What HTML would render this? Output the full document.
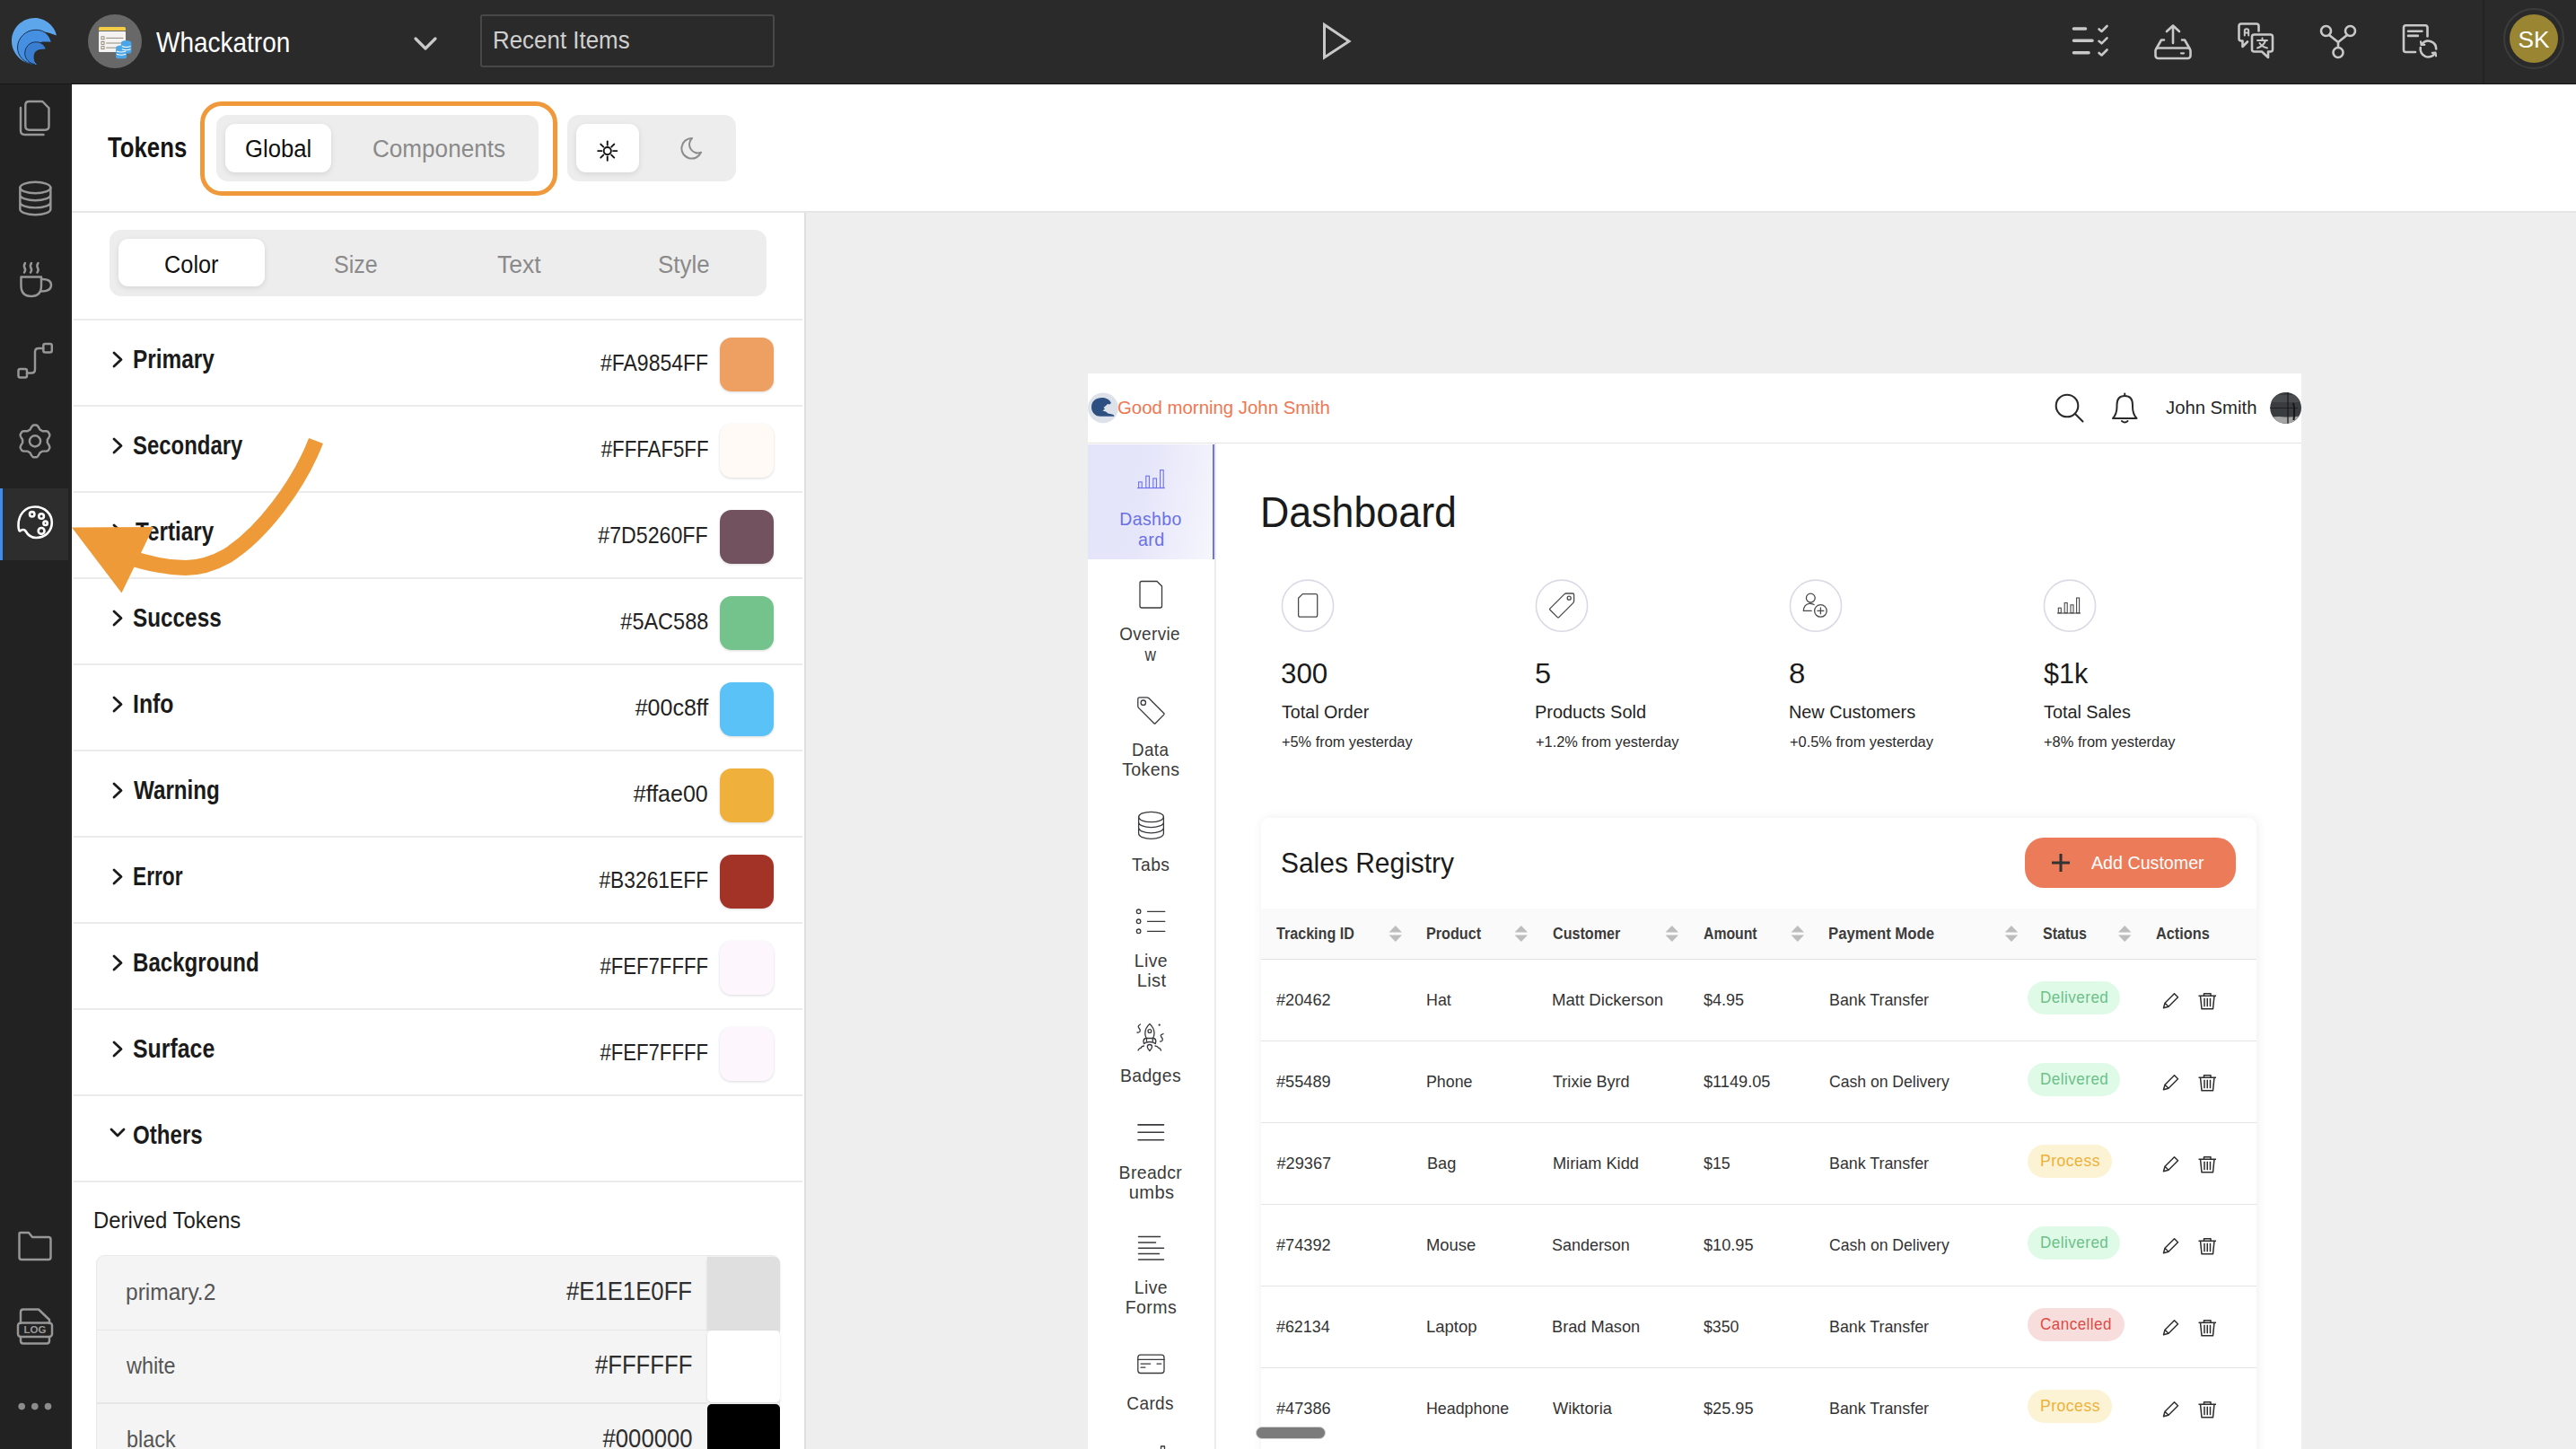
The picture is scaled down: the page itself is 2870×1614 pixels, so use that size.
<!DOCTYPE html>
<html><head><meta charset="utf-8">
<style>
*{box-sizing:border-box;margin:0;padding:0}
html,body{width:2870px;height:1614px;overflow:hidden;background:#eeeeee;font-family:"Liberation Sans",sans-serif;position:relative}
.a{position:absolute}
.t{position:absolute;white-space:nowrap;line-height:1}
svg.ov{position:absolute;left:0;top:0;width:2870px;height:1614px;pointer-events:none}
</style></head>
<body>
<div class="a" style="left:0px;top:0px;width:2870px;height:92.5px;background:#2a2a2a"></div>
<div class="a" style="left:0px;top:92.5px;width:2870px;height:1.3px;background:#161616"></div>
<div id="t1" class="t" style="top:31.66px;font-size:30.52px;color:#fff;left:174.10px;transform-origin:left center;transform:scaleX(0.9167);">Whackatron</div>
<div class="a" style="left:534.5px;top:16px;width:328.5px;height:59px;border:2px solid #484848;border-radius:3px"></div>
<div id="t2" class="t" style="top:30.00px;font-size:28.34px;color:#cfcfcf;left:549.40px;transform-origin:left center;transform:scaleX(0.9146);">Recent Items</div>
<div class="a" style="left:2766px;top:0px;width:1.5px;height:93px;background:#232323"></div>
<div class="a" style="left:0px;top:93.8px;width:80px;height:1521px;background:#222"></div>
<div class="a" style="left:78px;top:93.8px;width:1px;height:1521px;background:#2a2a2a"></div>
<div class="a" style="left:79px;top:93.8px;width:1px;height:1521px;background:#181818"></div>
<div class="a" style="left:0px;top:544px;width:76px;height:80px;background:#2d2d2d"></div>
<div class="a" style="left:0px;top:544px;width:3px;height:80px;background:#3e8ded"></div>
<div class="a" style="left:80px;top:93.8px;width:2790px;height:143.2px;background:#fff"></div>
<div class="a" style="left:80px;top:235px;width:2790px;height:2px;background:#e6e6e6"></div>
<div id="t4" class="t" style="top:149.16px;font-size:30.52px;color:#151515;font-weight:bold;left:120.10px;transform-origin:left center;transform:scaleX(0.8436);">Tokens</div>
<div class="a" style="left:222.5px;top:112.5px;width:398.5px;height:105.5px;border:5px solid #f0993a;border-radius:24px"></div>
<div class="a" style="left:241px;top:128px;width:359px;height:74px;background:#ededed;border-radius:13px"></div>
<div class="a" style="left:251px;top:138px;width:118px;height:54px;background:#fff;border-radius:11px;box-shadow:0 2px 6px rgba(0,0,0,.10)"></div>
<div id="t5" class="t" style="top:151.62px;font-size:27.62px;color:#111;left:273.30px;transform-origin:left center;transform:scaleX(0.9298);">Global</div>
<div id="t6" class="t" style="top:151.62px;font-size:27.62px;color:#8a8a8a;left:415.20px;transform-origin:left center;transform:scaleX(0.9452);">Components</div>
<div class="a" style="left:632px;top:128px;width:188px;height:74px;background:#ededed;border-radius:13px"></div>
<div class="a" style="left:642px;top:138px;width:70px;height:54px;background:#fff;border-radius:11px;box-shadow:0 2px 6px rgba(0,0,0,.10)"></div>
<div class="a" style="left:80px;top:237px;width:816px;height:1377px;background:#fff"></div>
<div class="a" style="left:895.5px;top:237px;width:2px;height:1377px;background:#dedede"></div>
<div class="a" style="left:121.5px;top:256px;width:732.5px;height:73.5px;background:#ededed;border-radius:13px"></div>
<div class="a" style="left:132px;top:266px;width:162.5px;height:53px;background:#fff;border-radius:11px;box-shadow:0 2px 6px rgba(0,0,0,.10)"></div>
<div id="t7" class="t" style="top:279.53px;font-size:28.20px;color:#111;left:182.66px;transform-origin:left center;transform:scaleX(0.8988);">Color</div>
<div id="t8" class="t" style="top:279.53px;font-size:28.20px;color:#8a8a8a;left:372.20px;transform-origin:left center;transform:scaleX(0.8868);">Size</div>
<div id="t9" class="t" style="top:279.53px;font-size:28.20px;color:#8a8a8a;left:554.20px;transform-origin:left center;transform:scaleX(0.9412);">Text</div>
<div id="t10" class="t" style="top:279.53px;font-size:28.20px;color:#8a8a8a;left:733.20px;transform-origin:left center;transform:scaleX(0.9180);">Style</div>
<div class="a" style="left:82px;top:355px;width:812px;height:2px;background:#ebebeb"></div>
<div class="a" style="left:82px;top:451px;width:812px;height:2px;background:#ebebeb"></div>
<div class="a" style="left:82px;top:547px;width:812px;height:2px;background:#ebebeb"></div>
<div class="a" style="left:82px;top:643px;width:812px;height:2px;background:#ebebeb"></div>
<div class="a" style="left:82px;top:739px;width:812px;height:2px;background:#ebebeb"></div>
<div class="a" style="left:82px;top:835px;width:812px;height:2px;background:#ebebeb"></div>
<div class="a" style="left:82px;top:931px;width:812px;height:2px;background:#ebebeb"></div>
<div class="a" style="left:82px;top:1027px;width:812px;height:2px;background:#ebebeb"></div>
<div class="a" style="left:82px;top:1123px;width:812px;height:2px;background:#ebebeb"></div>
<div class="a" style="left:82px;top:1219px;width:812px;height:2px;background:#ebebeb"></div>
<div class="a" style="left:82px;top:1315px;width:812px;height:2px;background:#ebebeb"></div>
<div id="t11" class="t" style="top:384.77px;font-size:29.80px;color:#1b1b1b;font-weight:bold;left:148.30px;transform-origin:left center;transform:scaleX(0.8182);">Primary</div>
<div id="t12" class="t" style="top:390.60px;font-size:26.45px;color:#232323;right:2081.00px;transform-origin:right center;transform:scaleX(0.8702);">#FA9854FF</div>
<div class="a" style="left:802px;top:376px;width:60px;height:60px;background:#eda062;border-radius:13px;box-shadow:0 1px 3px rgba(0,0,0,.15)"></div>
<div id="t13" class="t" style="top:480.77px;font-size:29.80px;color:#1b1b1b;font-weight:bold;left:148.30px;transform-origin:left center;transform:scaleX(0.8026);">Secondary</div>
<div id="t14" class="t" style="top:486.60px;font-size:26.45px;color:#232323;right:2081.00px;transform-origin:right center;transform:scaleX(0.8407);">#FFFAF5FF</div>
<div class="a" style="left:802px;top:472px;width:60px;height:60px;background:#fffaf5;border-radius:13px;box-shadow:0 1px 3px rgba(0,0,0,.15)"></div>
<div id="t15" class="t" style="top:576.77px;font-size:29.80px;color:#1b1b1b;font-weight:bold;left:150.70px;transform-origin:left center;transform:scaleX(0.8137);">Tertiary</div>
<div id="t16" class="t" style="top:582.60px;font-size:26.45px;color:#232323;right:2081.00px;transform-origin:right center;transform:scaleX(0.8759);">#7D5260FF</div>
<div class="a" style="left:802px;top:568px;width:60px;height:60px;background:#735260;border-radius:13px;box-shadow:0 1px 3px rgba(0,0,0,.15)"></div>
<div id="t17" class="t" style="top:672.77px;font-size:29.80px;color:#1b1b1b;font-weight:bold;left:148.30px;transform-origin:left center;transform:scaleX(0.8159);">Success</div>
<div id="t18" class="t" style="top:678.60px;font-size:26.45px;color:#232323;right:2081.00px;transform-origin:right center;transform:scaleX(0.8880);">#5AC588</div>
<div class="a" style="left:802px;top:664px;width:60px;height:60px;background:#74c28c;border-radius:13px;box-shadow:0 1px 3px rgba(0,0,0,.15)"></div>
<div id="t19" class="t" style="top:768.77px;font-size:29.80px;color:#1b1b1b;font-weight:bold;left:148.30px;transform-origin:left center;transform:scaleX(0.8327);">Info</div>
<div id="t20" class="t" style="top:774.60px;font-size:26.45px;color:#232323;right:2081.00px;transform-origin:right center;transform:scaleX(0.9458);">#00c8ff</div>
<div class="a" style="left:802px;top:760px;width:60px;height:60px;background:#5ac2f7;border-radius:13px;box-shadow:0 1px 3px rgba(0,0,0,.15)"></div>
<div id="t21" class="t" style="top:864.77px;font-size:29.80px;color:#1b1b1b;font-weight:bold;left:149.10px;transform-origin:left center;transform:scaleX(0.8117);">Warning</div>
<div id="t22" class="t" style="top:870.60px;font-size:26.45px;color:#232323;right:2081.00px;transform-origin:right center;transform:scaleX(0.9458);">#ffae00</div>
<div class="a" style="left:802px;top:856px;width:60px;height:60px;background:#f0b03c;border-radius:13px;box-shadow:0 1px 3px rgba(0,0,0,.15)"></div>
<div id="t23" class="t" style="top:960.77px;font-size:29.80px;color:#1b1b1b;font-weight:bold;left:148.30px;transform-origin:left center;transform:scaleX(0.7626);">Error</div>
<div id="t24" class="t" style="top:966.60px;font-size:26.45px;color:#232323;right:2081.00px;transform-origin:right center;transform:scaleX(0.8624);">#B3261EFF</div>
<div class="a" style="left:802px;top:952px;width:60px;height:60px;background:#a33327;border-radius:13px;box-shadow:0 1px 3px rgba(0,0,0,.15)"></div>
<div id="t25" class="t" style="top:1056.77px;font-size:29.80px;color:#1b1b1b;font-weight:bold;left:148.30px;transform-origin:left center;transform:scaleX(0.8088);">Background</div>
<div id="t26" class="t" style="top:1062.60px;font-size:26.45px;color:#232323;right:2081.00px;transform-origin:right center;transform:scaleX(0.8371);">#FEF7FFFF</div>
<div class="a" style="left:802px;top:1048px;width:60px;height:60px;background:#fdf7fd;border-radius:13px;box-shadow:0 1px 3px rgba(0,0,0,.15)"></div>
<div id="t27" class="t" style="top:1152.77px;font-size:29.80px;color:#1b1b1b;font-weight:bold;left:148.30px;transform-origin:left center;transform:scaleX(0.8351);">Surface</div>
<div id="t28" class="t" style="top:1158.60px;font-size:26.45px;color:#232323;right:2081.00px;transform-origin:right center;transform:scaleX(0.8371);">#FEF7FFFF</div>
<div class="a" style="left:802px;top:1144px;width:60px;height:60px;background:#fdf7fd;border-radius:13px;box-shadow:0 1px 3px rgba(0,0,0,.15)"></div>
<div id="t29" class="t" style="top:1248.77px;font-size:29.80px;color:#1b1b1b;font-weight:bold;left:148.30px;transform-origin:left center;transform:scaleX(0.8090);">Others</div>
<div id="t30" class="t" style="top:1346.69px;font-size:25.87px;color:#1e1e1e;left:104.46px;transform-origin:left center;transform:scaleX(0.9235);">Derived Tokens</div>
<div class="a" style="left:106.5px;top:1398.3px;width:762.5px;height:300px;background:#f4f4f4;border:1.5px solid #e9e9e9;border-radius:9px"></div>
<div class="a" style="left:108px;top:1480.5px;width:680px;height:1.5px;background:#e6e6e6"></div>
<div class="a" style="left:108px;top:1562px;width:680px;height:1.5px;background:#e6e6e6"></div>
<div class="a" style="left:788px;top:1399.5px;width:80.5px;height:81.5px;background:#dfdfdf;border-top-right-radius:8px;box-shadow:0 1px 3px rgba(0,0,0,.12)"></div>
<div class="a" style="left:788px;top:1482px;width:80.5px;height:80px;background:#fff;border-radius:5px;box-shadow:0 1px 3px rgba(0,0,0,.12)"></div>
<div class="a" style="left:788px;top:1564px;width:80.5px;height:80px;background:#000;border-radius:5px"></div>
<div id="t31" class="t" style="top:1427.41px;font-size:25.15px;color:#555;left:140.18px;transform-origin:left center;transform:scaleX(0.9746);">primary.2</div>
<div id="t32" class="t" style="top:1423.35px;font-size:29.94px;color:#2e2e2e;right:2098.80px;transform-origin:right center;transform:scaleX(0.8595);">#E1E1E0FF</div>
<div id="t33" class="t" style="top:1509.01px;font-size:25.15px;color:#555;left:140.90px;transform-origin:left center;transform:scaleX(0.9300);">white</div>
<div id="t34" class="t" style="top:1504.95px;font-size:29.94px;color:#2e2e2e;right:2098.80px;transform-origin:right center;transform:scaleX(0.8585);">#FFFFFF</div>
<div id="t35" class="t" style="top:1590.61px;font-size:25.15px;color:#555;left:140.90px;transform-origin:left center;transform:scaleX(0.9300);">black</div>
<div id="t36" class="t" style="top:1586.55px;font-size:29.94px;color:#2e2e2e;right:2098.80px;transform-origin:right center;transform:scaleX(0.8580);">#000000</div>
<div class="a" style="left:1212px;top:416px;width:1352px;height:1198px;background:#fff;overflow:hidden"></div>
<div class="a" style="left:1212px;top:492.5px;width:1352px;height:1.5px;background:#e4e4e4"></div>
<div id="t37" class="t" style="top:443.41px;font-size:21.08px;color:#ee7752;left:1245.35px;transform-origin:left center;transform:scaleX(0.9670);">Good morning John Smith</div>
<div id="t38" class="t" style="top:443.41px;font-size:21.08px;color:#262626;left:2413.00px;transform-origin:left center;transform:scaleX(0.9619);">John Smith</div>
<div class="a" style="left:1353px;top:494px;width:1.5px;height:1120px;background:#ececec"></div>
<div class="a" style="left:1212px;top:494.5px;width:139.5px;height:128px;background:linear-gradient(100deg,#e3e3fa 0%,#e6e6fa 45%,#f6f6fd 100%)"></div>
<div class="a" style="left:1350.5px;top:494.5px;width:2.5px;height:128px;background:#6d74ea"></div>
<div id="t39" class="t" style="top:568.08px;font-size:19.99px;color:#6a70e6;letter-spacing:0.400px;left:1282.50px;transform-origin:left center;transform:translateX(-50%) scaleX(0.9737);">Dashbo</div>
<div id="t40" class="t" style="top:590.58px;font-size:19.99px;color:#6a70e6;letter-spacing:0.400px;left:1282.50px;transform-origin:left center;transform:translateX(-50%) scaleX(0.9883);">ard</div>
<div id="t41" class="t" style="top:696.08px;font-size:19.99px;color:#3a3a3a;letter-spacing:0.400px;left:1282.50px;transform-origin:left center;transform:translateX(-50%) scaleX(0.9458);">Overvie</div>
<div id="t42" class="t" style="top:718.58px;font-size:19.99px;color:#3a3a3a;letter-spacing:0.400px;left:1282.50px;transform-origin:left center;transform:translateX(-50%) scaleX(0.8602);">w</div>
<div id="t43" class="t" style="top:824.68px;font-size:19.99px;color:#3a3a3a;letter-spacing:0.400px;left:1282.50px;transform-origin:left center;transform:translateX(-50%) scaleX(0.9404);">Data</div>
<div id="t44" class="t" style="top:847.18px;font-size:19.99px;color:#3a3a3a;letter-spacing:0.400px;left:1282.50px;transform-origin:left center;transform:translateX(-50%) scaleX(0.9778);">Tokens</div>
<div id="t45" class="t" style="top:953.48px;font-size:19.99px;color:#3a3a3a;letter-spacing:0.400px;left:1282.50px;transform-origin:left center;transform:translateX(-50%) scaleX(0.9631);">Tabs</div>
<div id="t46" class="t" style="top:1059.98px;font-size:19.99px;color:#3a3a3a;letter-spacing:0.400px;left:1282.50px;transform-origin:left center;transform:translateX(-50%) scaleX(0.9700);">Live</div>
<div id="t47" class="t" style="top:1082.48px;font-size:19.99px;color:#3a3a3a;letter-spacing:0.400px;left:1282.50px;transform-origin:left center;transform:translateX(-50%) scaleX(1.0058);">List</div>
<div id="t48" class="t" style="top:1188.28px;font-size:19.99px;color:#3a3a3a;letter-spacing:0.400px;left:1282.50px;transform-origin:left center;transform:translateX(-50%) scaleX(0.9700);">Badges</div>
<div id="t49" class="t" style="top:1295.88px;font-size:19.99px;color:#3a3a3a;letter-spacing:0.400px;left:1282.50px;transform-origin:left center;transform:translateX(-50%) scaleX(0.9700);">Breadcr</div>
<div id="t50" class="t" style="top:1318.38px;font-size:19.99px;color:#3a3a3a;letter-spacing:0.400px;left:1282.50px;transform-origin:left center;transform:translateX(-50%) scaleX(1.0051);">umbs</div>
<div id="t51" class="t" style="top:1423.83px;font-size:19.99px;color:#3a3a3a;letter-spacing:0.400px;left:1282.50px;transform-origin:left center;transform:translateX(-50%) scaleX(0.9700);">Live</div>
<div id="t52" class="t" style="top:1446.33px;font-size:19.99px;color:#3a3a3a;letter-spacing:0.400px;left:1282.50px;transform-origin:left center;transform:translateX(-50%) scaleX(0.9789);">Forms</div>
<div id="t53" class="t" style="top:1553.08px;font-size:19.99px;color:#3a3a3a;letter-spacing:0.400px;left:1282.50px;transform-origin:left center;transform:translateX(-50%) scaleX(0.9513);">Cards</div>
<div id="t54" class="t" style="top:546.08px;font-size:48.33px;color:#1b1b1b;left:1403.80px;transform-origin:left center;transform:scaleX(0.9261);">Dashboard</div>
<div id="t55" class="t" style="top:735.60px;font-size:30.89px;color:#1b1b1b;left:1427.20px;transform-origin:left center;transform:scaleX(1.0151);">300</div>
<div id="t56" class="t" style="top:781.66px;font-size:21.08px;color:#242424;left:1428.00px;transform-origin:left center;transform:scaleX(0.9327);">Total Order</div>
<div id="t57" class="t" style="top:818.77px;font-size:15.63px;color:#2a2a2a;left:1428.00px;transform-origin:left center;transform:scaleX(1.0447);">+5% from yesterday</div>
<div id="t58" class="t" style="top:735.60px;font-size:30.89px;color:#1b1b1b;left:1710.20px;transform-origin:left center;transform:scaleX(1.0517);">5</div>
<div id="t59" class="t" style="top:781.66px;font-size:21.08px;color:#242424;left:1710.20px;transform-origin:left center;transform:scaleX(0.9446);">Products Sold</div>
<div id="t60" class="t" style="top:818.77px;font-size:15.63px;color:#2a2a2a;left:1711.00px;transform-origin:left center;transform:scaleX(1.0460);">+1.2% from yesterday</div>
<div id="t61" class="t" style="top:735.60px;font-size:30.89px;color:#1b1b1b;left:1993.20px;transform-origin:left center;transform:scaleX(1.0667);">8</div>
<div id="t62" class="t" style="top:781.66px;font-size:21.08px;color:#242424;left:1993.20px;transform-origin:left center;transform:scaleX(0.9414);">New Customers</div>
<div id="t63" class="t" style="top:818.77px;font-size:15.63px;color:#2a2a2a;left:1994.00px;transform-origin:left center;transform:scaleX(1.0493);">+0.5% from yesterday</div>
<div id="t64" class="t" style="top:735.60px;font-size:30.89px;color:#1b1b1b;left:2277.00px;transform-origin:left center;transform:scaleX(0.9901);">$1k</div>
<div id="t65" class="t" style="top:781.66px;font-size:21.08px;color:#242424;left:2277.00px;transform-origin:left center;transform:scaleX(0.9403);">Total Sales</div>
<div id="t66" class="t" style="top:818.77px;font-size:15.63px;color:#2a2a2a;left:2277.00px;transform-origin:left center;transform:scaleX(1.0514);">+8% from yesterday</div>
<div class="a" style="left:1405px;top:911.25px;width:1109px;height:800px;background:#fff;border-radius:9px;box-shadow:1px 0 12px rgba(0,0,0,.07)"></div>
<div id="t67" class="t" style="top:944.93px;font-size:31.98px;color:#1b1b1b;left:1427.25px;transform-origin:left center;transform:scaleX(0.9366);">Sales Registry</div>
<div class="a" style="left:2255.5px;top:933px;width:235.75px;height:55.75px;background:#ec7b5a;border-radius:21px"></div>
<div id="t68" class="t" style="top:949.66px;font-size:21.08px;color:#fff;left:2330.10px;transform-origin:left center;transform:scaleX(0.9328);">Add Customer</div>
<div class="a" style="left:1405px;top:1012px;width:1109px;height:56px;background:#fafafa"></div>
<div class="a" style="left:1405px;top:1067.5px;width:1109px;height:1.5px;background:#e2e2e2"></div>
<div id="t69" class="t" style="top:1030.75px;font-size:18.90px;color:#3c3c3c;font-weight:bold;left:1422.10px;transform-origin:left center;transform:scaleX(0.8529);">Tracking ID</div>
<div id="t70" class="t" style="top:1030.75px;font-size:18.90px;color:#3c3c3c;font-weight:bold;left:1589.20px;transform-origin:left center;transform:scaleX(0.8566);">Product</div>
<div id="t71" class="t" style="top:1030.75px;font-size:18.90px;color:#3c3c3c;font-weight:bold;left:1730.00px;transform-origin:left center;transform:scaleX(0.8530);">Customer</div>
<div id="t72" class="t" style="top:1030.75px;font-size:18.90px;color:#3c3c3c;font-weight:bold;left:1898.00px;transform-origin:left center;transform:scaleX(0.8356);">Amount</div>
<div id="t73" class="t" style="top:1030.75px;font-size:18.90px;color:#3c3c3c;font-weight:bold;left:2037.25px;transform-origin:left center;transform:scaleX(0.8851);">Payment Mode</div>
<div id="t74" class="t" style="top:1030.75px;font-size:18.90px;color:#3c3c3c;font-weight:bold;left:2276.05px;transform-origin:left center;transform:scaleX(0.8488);">Status</div>
<div id="t75" class="t" style="top:1030.75px;font-size:18.90px;color:#3c3c3c;font-weight:bold;left:2402.00px;transform-origin:left center;transform:scaleX(0.8639);">Actions</div>
<div id="t76" class="t" style="top:1105.12px;font-size:18.17px;color:#333;left:1422.10px;transform-origin:left center;transform:scaleX(1.0003);">#20462</div>
<div id="t77" class="t" style="top:1105.12px;font-size:18.17px;color:#333;left:1589.20px;transform-origin:left center;transform:scaleX(0.9828);">Hat</div>
<div id="t78" class="t" style="top:1105.12px;font-size:18.17px;color:#333;left:1729.20px;transform-origin:left center;transform:scaleX(1.0252);">Matt Dickerson</div>
<div id="t79" class="t" style="top:1105.12px;font-size:18.17px;color:#333;left:1898.00px;transform-origin:left center;transform:scaleX(0.9891);">$4.95</div>
<div id="t80" class="t" style="top:1105.12px;font-size:18.17px;color:#333;left:2037.65px;transform-origin:left center;transform:scaleX(0.9822);">Bank Transfer</div>
<div class="a" style="left:2259px;top:1093px;width:103px;height:37px;background:#dffbe8;border-radius:19px"></div>
<div id="t81" class="t" style="top:1101.74px;font-size:18.31px;color:#6cc089;letter-spacing:0.500px;left:2273.20px;transform-origin:left center;transform:scaleX(0.9330);">Delivered</div>
<div class="a" style="left:1405px;top:1158.5px;width:1109px;height:1.5px;background:#e4e4e4"></div>
<div id="t82" class="t" style="top:1196.12px;font-size:18.17px;color:#333;left:1422.10px;transform-origin:left center;transform:scaleX(1.0003);">#55489</div>
<div id="t83" class="t" style="top:1196.12px;font-size:18.17px;color:#333;left:1589.20px;transform-origin:left center;transform:scaleX(0.9804);">Phone</div>
<div id="t84" class="t" style="top:1196.12px;font-size:18.17px;color:#333;left:1730.00px;transform-origin:left center;transform:scaleX(0.9942);">Trixie Byrd</div>
<div id="t85" class="t" style="top:1196.12px;font-size:18.17px;color:#333;left:1898.00px;transform-origin:left center;transform:scaleX(1.0001);">$1149.05</div>
<div id="t86" class="t" style="top:1196.12px;font-size:18.17px;color:#333;left:2037.65px;transform-origin:left center;transform:scaleX(0.9674);">Cash on Delivery</div>
<div class="a" style="left:2259px;top:1184px;width:103px;height:37px;background:#dffbe8;border-radius:19px"></div>
<div id="t87" class="t" style="top:1192.74px;font-size:18.31px;color:#6cc089;letter-spacing:0.500px;left:2273.20px;transform-origin:left center;transform:scaleX(0.9330);">Delivered</div>
<div class="a" style="left:1405px;top:1249.5px;width:1109px;height:1.5px;background:#e4e4e4"></div>
<div id="t88" class="t" style="top:1287.12px;font-size:18.17px;color:#333;left:1422.50px;">#29367</div>
<div id="t89" class="t" style="top:1287.12px;font-size:18.17px;color:#333;left:1590.00px;">Bag</div>
<div id="t90" class="t" style="top:1287.12px;font-size:18.17px;color:#333;left:1730.00px;">Miriam Kidd</div>
<div id="t91" class="t" style="top:1287.12px;font-size:18.17px;color:#333;left:1898.00px;transform-origin:left center;transform:scaleX(0.9834);">$15</div>
<div id="t92" class="t" style="top:1287.12px;font-size:18.17px;color:#333;left:2037.65px;transform-origin:left center;transform:scaleX(0.9822);">Bank Transfer</div>
<div class="a" style="left:2259px;top:1275px;width:93.5px;height:37px;background:#fbf3d3;border-radius:19px"></div>
<div id="t93" class="t" style="top:1283.74px;font-size:18.31px;color:#eeb139;letter-spacing:0.500px;left:2273.20px;transform-origin:left center;transform:scaleX(0.9620);">Process</div>
<div class="a" style="left:1405px;top:1340.5px;width:1109px;height:1.5px;background:#e4e4e4"></div>
<div id="t94" class="t" style="top:1378.12px;font-size:18.17px;color:#333;left:1422.10px;transform-origin:left center;transform:scaleX(1.0003);">#74392</div>
<div id="t95" class="t" style="top:1378.12px;font-size:18.17px;color:#333;left:1589.20px;transform-origin:left center;transform:scaleX(1.0143);">Mouse</div>
<div id="t96" class="t" style="top:1378.12px;font-size:18.17px;color:#333;left:1729.20px;transform-origin:left center;transform:scaleX(0.9884);">Sanderson</div>
<div id="t97" class="t" style="top:1378.12px;font-size:18.17px;color:#333;left:1898.00px;transform-origin:left center;transform:scaleX(1.0001);">$10.95</div>
<div id="t98" class="t" style="top:1378.12px;font-size:18.17px;color:#333;left:2037.65px;transform-origin:left center;transform:scaleX(0.9674);">Cash on Delivery</div>
<div class="a" style="left:2259px;top:1366px;width:103px;height:37px;background:#dffbe8;border-radius:19px"></div>
<div id="t99" class="t" style="top:1374.74px;font-size:18.31px;color:#6cc089;letter-spacing:0.500px;left:2273.20px;transform-origin:left center;transform:scaleX(0.9330);">Delivered</div>
<div class="a" style="left:1405px;top:1431.5px;width:1109px;height:1.5px;background:#e4e4e4"></div>
<div id="t100" class="t" style="top:1469.12px;font-size:18.17px;color:#333;left:1422.10px;transform-origin:left center;transform:scaleX(0.9836);">#62134</div>
<div id="t101" class="t" style="top:1469.12px;font-size:18.17px;color:#333;left:1589.20px;transform-origin:left center;transform:scaleX(1.0185);">Laptop</div>
<div id="t102" class="t" style="top:1469.12px;font-size:18.17px;color:#333;left:1729.20px;transform-origin:left center;transform:scaleX(1.0026);">Brad Mason</div>
<div id="t103" class="t" style="top:1469.12px;font-size:18.17px;color:#333;left:1898.00px;transform-origin:left center;transform:scaleX(0.9753);">$350</div>
<div id="t104" class="t" style="top:1469.12px;font-size:18.17px;color:#333;left:2037.65px;transform-origin:left center;transform:scaleX(0.9822);">Bank Transfer</div>
<div class="a" style="left:2259px;top:1457px;width:107.5px;height:37px;background:#f8dddd;border-radius:19px"></div>
<div id="t105" class="t" style="top:1465.74px;font-size:18.31px;color:#dd4a44;letter-spacing:0.500px;left:2273.20px;transform-origin:left center;transform:scaleX(0.9310);">Cancelled</div>
<div class="a" style="left:1405px;top:1522.5px;width:1109px;height:1.5px;background:#e4e4e4"></div>
<div id="t106" class="t" style="top:1560.12px;font-size:18.17px;color:#333;left:1422.10px;transform-origin:left center;transform:scaleX(1.0003);">#47386</div>
<div id="t107" class="t" style="top:1560.12px;font-size:18.17px;color:#333;left:1589.20px;transform-origin:left center;transform:scaleX(0.9811);">Headphone</div>
<div id="t108" class="t" style="top:1560.12px;font-size:18.17px;color:#333;left:1730.00px;transform-origin:left center;transform:scaleX(1.0039);">Wiktoria</div>
<div id="t109" class="t" style="top:1560.12px;font-size:18.17px;color:#333;left:1898.00px;transform-origin:left center;transform:scaleX(1.0001);">$25.95</div>
<div id="t110" class="t" style="top:1560.12px;font-size:18.17px;color:#333;left:2037.65px;transform-origin:left center;transform:scaleX(0.9822);">Bank Transfer</div>
<div class="a" style="left:2259px;top:1548px;width:93.5px;height:37px;background:#fbf3d3;border-radius:19px"></div>
<div id="t111" class="t" style="top:1556.74px;font-size:18.31px;color:#eeb139;letter-spacing:0.500px;left:2273.20px;transform-origin:left center;transform:scaleX(0.9620);">Process</div>
<div class="a" style="left:1399px;top:1588.75px;width:78px;height:14.5px;background:#7b7b7b;border:1px solid #d0d0d0;border-radius:8px"></div>
<div id="t112" class="t" style="top:1476.26px;font-size:11.50px;color:#9a9a9a;font-weight:bold;left:39.00px;transform-origin:left center;transform:translateX(-50%) scaleX(1.0000);">LOG</div>
<svg class="ov" width="2870" height="1614" viewBox="0 0 2870 1614">
<path d="M463 43 L474 54 L485 43" fill="none" stroke="#c9c9c9" stroke-width="3.2" stroke-linecap="round" stroke-linejoin="round"/>
<path d="M1475.5 27.5 L1503 46 L1475.5 64 Z" fill="none" stroke="#c8c8c8" stroke-width="3" stroke-linejoin="miter"/>
<circle cx="2823" cy="43" r="33" fill="none" stroke="#3c3c3c" stroke-width="2"/>
<circle cx="2823" cy="43" r="27" fill="#9a8532"/>
<path d="M127.0 393.0 L135.0 400.5 L127.0 408.0" fill="none" stroke="#1b1b1b" stroke-width="2.8" stroke-linecap="round" stroke-linejoin="round"/>
<path d="M127.0 489.0 L135.0 496.5 L127.0 504.0" fill="none" stroke="#1b1b1b" stroke-width="2.8" stroke-linecap="round" stroke-linejoin="round"/>
<path d="M127.0 585.0 L135.0 592.5 L127.0 600.0" fill="none" stroke="#1b1b1b" stroke-width="2.8" stroke-linecap="round" stroke-linejoin="round"/>
<path d="M127.0 681.0 L135.0 688.5 L127.0 696.0" fill="none" stroke="#1b1b1b" stroke-width="2.8" stroke-linecap="round" stroke-linejoin="round"/>
<path d="M127.0 777.0 L135.0 784.5 L127.0 792.0" fill="none" stroke="#1b1b1b" stroke-width="2.8" stroke-linecap="round" stroke-linejoin="round"/>
<path d="M127.0 873.0 L135.0 880.5 L127.0 888.0" fill="none" stroke="#1b1b1b" stroke-width="2.8" stroke-linecap="round" stroke-linejoin="round"/>
<path d="M127.0 969.0 L135.0 976.5 L127.0 984.0" fill="none" stroke="#1b1b1b" stroke-width="2.8" stroke-linecap="round" stroke-linejoin="round"/>
<path d="M127.0 1065.0 L135.0 1072.5 L127.0 1080.0" fill="none" stroke="#1b1b1b" stroke-width="2.8" stroke-linecap="round" stroke-linejoin="round"/>
<path d="M127.0 1161.0 L135.0 1168.5 L127.0 1176.0" fill="none" stroke="#1b1b1b" stroke-width="2.8" stroke-linecap="round" stroke-linejoin="round"/>
<path d="M124.0 1258.0 L131.0 1265.0 L138.0 1258.0" fill="none" stroke="#1b1b1b" stroke-width="2.8" stroke-linecap="round" stroke-linejoin="round"/>
<circle cx="1229" cy="454.4" r="16.9" fill="#dde2ea"/>
<path d="M1241.5 463.8 H1226 C1219.5 463.8 1216 458.5 1216 453.5 C1216 447 1221 443 1228 443 C1233 443 1236.5 445.5 1238 449 L1236 450.5 L1234 450 L1232 452 L1229.5 454 L1231 455.5 L1228.5 457.5 L1232 458.5 L1234.5 460.5 L1239 461.5 Q1241.5 462 1241.5 463.8Z" fill="#2e4f82"/>
<circle cx="1457.0" cy="674.7" r="28.6" fill="none" stroke="#dcd9e5" stroke-width="1.6"/>
<circle cx="1740.0" cy="674.7" r="28.6" fill="none" stroke="#dcd9e5" stroke-width="1.6"/>
<circle cx="2023.0" cy="674.7" r="28.6" fill="none" stroke="#dcd9e5" stroke-width="1.6"/>
<circle cx="2306.0" cy="674.7" r="28.6" fill="none" stroke="#dcd9e5" stroke-width="1.6"/>
<path d="M2296 951 V971 M2286 961 H2306" stroke="#333" stroke-width="3"/>
<path d="M1547.5 1038.5 L1554.8 1031 L1562.0 1038.5Z M1547.5 1041.5 L1554.8 1049 L1562.0 1041.5Z" fill="#bdbdbd"/>
<path d="M1687.5 1038.5 L1694.8 1031 L1702.0 1038.5Z M1687.5 1041.5 L1694.8 1049 L1702.0 1041.5Z" fill="#bdbdbd"/>
<path d="M1855.5 1038.5 L1862.8 1031 L1870.0 1038.5Z M1855.5 1041.5 L1862.8 1049 L1870.0 1041.5Z" fill="#bdbdbd"/>
<path d="M1995.5 1038.5 L2002.8 1031 L2010.0 1038.5Z M1995.5 1041.5 L2002.8 1049 L2010.0 1041.5Z" fill="#bdbdbd"/>
<path d="M2233.8 1038.5 L2241.0 1031 L2248.2 1038.5Z M2233.8 1041.5 L2241.0 1049 L2248.2 1041.5Z" fill="#bdbdbd"/>
<path d="M2360.0 1038.5 L2367.2 1031 L2374.5 1038.5Z M2360.0 1041.5 L2367.2 1049 L2374.5 1041.5Z" fill="#bdbdbd"/>
<path d="M63,39.5 C61.5,30 51,20 38.8,20 C24.5,20 13,31.5 13,45.8 C13,60 25,72 40.7,72 C38,69.5 37,66.5 37.2,63.5 C37.5,55 40,40 48.5,35.2 C53,36 58,37.5 63,39.5 Z" fill="#5ea6eb"/>
<path d="M56.7,46.8 C55,39 48,33.3 39.8,33.3 C28.5,33.3 19.5,42.5 19.5,53 C19.5,63 28,71.5 40.7,72 C38,69.5 37,66.5 37.2,63.5 C37.5,58 40,50 46,46.8 C49,46.3 53,46.4 56.7,46.8 Z" fill="#4590e3"/>
<path d="M50.7,54.5 C49,50 45,46.8 39.8,46.8 C33,46.8 27.7,52.5 27.7,59.5 C27.7,66 33,71.5 40.7,72 C38,69.5 37,66.5 37.2,63.5 C37.5,58.5 41,55.5 45,55 C47,54.7 49,54.8 50.7,54.5 Z" fill="#3a7ed1"/>
<path d="M38,71.8 C27,70.5 19.5,62.5 19.5,53 C19.5,42.5 28.5,33.3 39.8,33.3 C44,33.3 47,34.3 49.5,35.8 M39,71.8 C32.5,70.5 27.7,65.5 27.7,59.5 C27.7,52.5 33,46.8 39.8,46.8 C42.5,46.8 44.5,47.3 46.5,48.3" fill="none" stroke="#1c2f48" stroke-width="1"/>
<circle cx="128" cy="46" r="30" fill="#686868"/>
<path d="M111.5 30 H138.5 Q140 30 140 31.5 V34 H110 V31.5 Q110 30 111.5 30Z" fill="#f3cd47"/>
<rect x="110" y="35" width="30" height="23" rx="1" fill="#f4f3f1"/>
<g fill="#fff" stroke="#8a7d70" stroke-width="0.9"><rect x="113" y="40.8" width="3" height="3"/><rect x="113" y="46.4" width="3" height="3"/><rect x="113" y="51.6" width="3" height="3"/></g>
<g stroke="#8a7d70" stroke-width="0.9"><path d="M118.2 42.4 H137.4 M118.2 48 H137.4 M118.2 53.2 H137.4"/></g>
<g fill="#4aa6e6"><rect x="135" y="47" width="11.4" height="12.5" rx="2"/><ellipse cx="140.7" cy="47.5" rx="5.7" ry="2.6"/>
<rect x="129.1" y="52.7" width="11.9" height="12.5" rx="2"/><ellipse cx="135" cy="53.2" rx="5.95" ry="2.6"/></g>
<g stroke="#fff" stroke-width="1.1" fill="none"><path d="M135.8 51.5 Q140.7 53.5 145.6 51.5 M135.8 54.8 Q140.7 56.8 145.6 54.8"/>
<path d="M129.9 57 Q135 59 140.2 57 M129.9 60.3 Q135 62.3 140.2 60.3"/></g>
<g fill="none" stroke="#c8c8c8" stroke-width="2.6" stroke-linecap="round" stroke-linejoin="round"><path d="M2310.5 32 H2323.5 M2310.5 45.3 H2331 M2310.5 58.7 H2327" stroke-width="3.6"/><path d="M2338.5 32.5 L2341.5 35 L2347.5 29 M2338.5 45.8 L2341.5 48.3 L2347.5 42.3 M2338.5 59 L2341.5 61.5 L2347.5 55.5"/></g>
<g fill="none" stroke="#c8c8c8" stroke-width="2.6" stroke-linecap="round" stroke-linejoin="round"><path d="M2421 28.5 V48 M2414 35 L2421 28.5 L2428 35"/><path d="M2411 44.5 H2408 L2402.5 54 M2431 44.5 H2434 L2439.5 54"/><rect x="2401.5" y="53.5" width="39" height="11.5" rx="3"/><path d="M2430 59.3 H2433" stroke-width="2.2"/></g>
<g fill="none" stroke="#c8c8c8" stroke-width="2.6" stroke-linecap="round" stroke-linejoin="round"><path d="M2516.5 34.5 V29 Q2516.5 26.5 2514 26.5 H2497 Q2494.5 26.5 2494.5 29 V43 Q2494.5 45.5 2497 45.5 H2498.5 V52 L2504 46.5"/><path d="M2511.5 38.5 H2529.5 Q2532 38.5 2532 41 V55 Q2532 57.5 2529.5 57.5 H2527 V64 L2520 57.5 H2511.5 Q2509 57.5 2509 55 V41 Q2509 38.5 2511.5 38.5Z"/><path d="M2500.8 39.5 V34.5 Q2500.8 32.3 2503 32.3 Q2505.2 32.3 2505.2 34.5 V39.5 M2500.8 36.5 H2505.2" stroke-width="2"/><path d="M2515 45 H2526 M2520.5 42.5 V45 M2524 45.5 Q2521.5 51.5 2515 53.5 M2517.5 48 Q2520 52 2526 53.5" stroke-width="2"/></g>
<g fill="none" stroke="#c8c8c8" stroke-width="2.6" stroke-linecap="round" stroke-linejoin="round"><circle cx="2591.5" cy="34.5" r="5.5"/><circle cx="2618.5" cy="34.5" r="5.5"/><circle cx="2605" cy="58.5" r="5.5"/><path d="M2595 39 L2605 47 L2615 39 M2605 47 V53"/></g>
<g fill="none" stroke="#c8c8c8" stroke-width="2.6" stroke-linecap="round" stroke-linejoin="round"><path d="M2691 58 H2680.5 Q2678 58 2678 55.5 V30.7 Q2678 28.2 2680.5 28.2 H2702 Q2704.5 28.2 2704.5 30.7 V40.5"/><path d="M2683 34.8 H2698.4 M2683 39.9 H2693.8"/><path d="M2698.5 49 A8.8 8.8 0 0 1 2714.2 54.5 M2712.8 59.5 A8.8 8.8 0 0 1 2696.8 53"/><path d="M2697 46.3 L2697.6 50 L2701.3 49.8 M2714 62.3 L2713.5 58.6 L2709.8 58.9" stroke-width="2.2"/></g>
<g fill="none" stroke="#111" stroke-width="1.9" stroke-linecap="round"><circle cx="676.75" cy="168.1" r="4.1"/><path d="M683.05 168.10 L687.35 168.10"/><path d="M681.20 172.55 L684.25 175.60"/><path d="M676.75 174.40 L676.75 178.70"/><path d="M672.30 172.55 L669.25 175.60"/><path d="M670.45 168.10 L666.15 168.10"/><path d="M672.30 163.65 L669.25 160.60"/><path d="M676.75 161.80 L676.75 157.50"/><path d="M681.20 163.65 L684.25 160.60"/></g>
<path d="M771 154 A11.3 11.3 0 1 0 781.1 169.7 A9.5 9.5 0 0 1 771 154Z" fill="none" stroke="#8c8c8c" stroke-width="2" stroke-linejoin="round"/>
<g fill="none" stroke="#979797" stroke-width="2.45" stroke-linecap="round" stroke-linejoin="round"><path d="M23 120 V145.5 Q23 150 27.5 150 H48.5"/><path d="M32.5 113 H47.3 L54.5 120.3 V140.5 Q54.5 144.7 50.3 144.7 H32.5 Q28.3 144.7 28.3 140.5 V117.2 Q28.3 113 32.5 113Z"/></g>
<g fill="none" stroke="#979797" stroke-width="2.45" stroke-linecap="round" stroke-linejoin="round"><ellipse cx="39.35" cy="209" rx="17" ry="6.2"/><path d="M22.35 209 V233 A17 6.2 0 0 0 56.35 233 V209 M22.35 217 A17 6.2 0 0 0 56.35 217 M22.35 225.2 A17 6.2 0 0 0 56.35 225.2"/></g>
<g fill="none" stroke="#979797" stroke-width="2.45" stroke-linecap="round" stroke-linejoin="round"><path d="M23.5 308.5 H46 V318 Q46 330 34.75 330 Q23.5 330 23.5 318Z"/><path d="M46 311 Q57 310.5 57 317.5 Q57 324.5 46 324.5"/><path d="M28 293 Q26 296 27.5 298.5 Q29 301 27 303.5 M35 293 Q33 296 34.5 298.5 Q36 301 34 303.5 M42.5 293 Q40.5 296 42 298.5 Q43.5 301 41.5 303.5"/></g>
<g fill="none" stroke="#979797" stroke-width="2.45" stroke-linecap="round" stroke-linejoin="round"><rect x="20.5" y="411" width="9.5" height="9.5" rx="2"/><rect x="48.3" y="383" width="9.5" height="9.5" rx="2"/><path d="M30 415.5 H35 Q39 415.5 39 411.5 V392 Q39 388 43 388 H48.3"/></g>
<g fill="none" stroke="#979797" stroke-width="2.45" stroke-linecap="round" stroke-linejoin="round"><path d="M39.00 473.50 L39.47 473.51 L39.94 473.52 L40.40 473.56 L40.87 473.60 L41.31 473.88 L41.72 474.24 L42.10 474.65 L42.47 475.09 L42.80 475.56 L43.12 476.04 L43.40 476.53 L43.67 477.01 L43.93 477.48 L44.17 477.93 L44.41 478.34 L44.65 478.70 L44.98 478.85 L45.31 479.02 L45.63 479.18 L45.95 479.36 L46.26 479.55 L46.57 479.74 L46.87 479.94 L47.17 480.15 L47.60 480.19 L48.08 480.19 L48.59 480.17 L49.12 480.16 L49.68 480.15 L50.24 480.16 L50.82 480.19 L51.39 480.24 L51.95 480.34 L52.50 480.47 L53.02 480.64 L53.48 480.88 L53.75 481.26 L54.01 481.65 L54.26 482.05 L54.50 482.45 L54.73 482.86 L54.95 483.27 L55.16 483.69 L55.35 484.12 L55.32 484.64 L55.22 485.18 L55.06 485.71 L54.86 486.25 L54.62 486.77 L54.36 487.28 L54.08 487.78 L53.80 488.25 L53.52 488.71 L53.25 489.14 L53.01 489.56 L52.82 489.95 L52.86 490.31 L52.88 490.67 L52.90 491.04 L52.90 491.40 L52.90 491.76 L52.88 492.13 L52.86 492.49 L52.82 492.85 L53.01 493.24 L53.25 493.66 L53.52 494.09 L53.80 494.55 L54.08 495.02 L54.36 495.52 L54.62 496.03 L54.86 496.55 L55.06 497.09 L55.22 497.62 L55.32 498.16 L55.35 498.68 L55.16 499.11 L54.95 499.53 L54.73 499.94 L54.50 500.35 L54.26 500.75 L54.01 501.15 L53.75 501.54 L53.48 501.92 L53.02 502.16 L52.50 502.33 L51.95 502.46 L51.39 502.56 L50.82 502.61 L50.24 502.64 L49.68 502.65 L49.12 502.64 L48.59 502.63 L48.08 502.61 L47.60 502.61 L47.17 502.65 L46.87 502.86 L46.57 503.06 L46.26 503.25 L45.95 503.44 L45.63 503.62 L45.31 503.78 L44.98 503.95 L44.65 504.10 L44.41 504.46 L44.17 504.87 L43.93 505.32 L43.67 505.79 L43.40 506.27 L43.12 506.76 L42.80 507.24 L42.47 507.71 L42.10 508.15 L41.72 508.56 L41.31 508.92 L40.87 509.20 L40.40 509.24 L39.94 509.28 L39.47 509.29 L39.00 509.30 L38.53 509.29 L38.06 509.28 L37.60 509.24 L37.13 509.20 L36.69 508.92 L36.28 508.56 L35.90 508.15 L35.53 507.71 L35.20 507.24 L34.88 506.76 L34.60 506.27 L34.33 505.79 L34.07 505.32 L33.83 504.87 L33.59 504.46 L33.35 504.10 L33.02 503.95 L32.69 503.78 L32.37 503.62 L32.05 503.44 L31.74 503.25 L31.43 503.06 L31.13 502.86 L30.83 502.65 L30.40 502.61 L29.92 502.61 L29.41 502.63 L28.88 502.64 L28.32 502.65 L27.76 502.64 L27.18 502.61 L26.61 502.56 L26.05 502.46 L25.50 502.33 L24.98 502.16 L24.52 501.92 L24.25 501.54 L23.99 501.15 L23.74 500.75 L23.50 500.35 L23.27 499.94 L23.05 499.53 L22.84 499.11 L22.65 498.68 L22.68 498.16 L22.78 497.62 L22.94 497.09 L23.14 496.55 L23.38 496.03 L23.64 495.52 L23.92 495.02 L24.20 494.55 L24.48 494.09 L24.75 493.66 L24.99 493.24 L25.18 492.85 L25.14 492.49 L25.12 492.13 L25.10 491.76 L25.10 491.40 L25.10 491.04 L25.12 490.67 L25.14 490.31 L25.18 489.95 L24.99 489.56 L24.75 489.14 L24.48 488.71 L24.20 488.25 L23.92 487.78 L23.64 487.28 L23.38 486.77 L23.14 486.25 L22.94 485.71 L22.78 485.18 L22.68 484.64 L22.65 484.12 L22.84 483.69 L23.05 483.27 L23.27 482.86 L23.50 482.45 L23.74 482.05 L23.99 481.65 L24.25 481.26 L24.52 480.88 L24.98 480.64 L25.50 480.47 L26.05 480.34 L26.61 480.24 L27.18 480.19 L27.76 480.16 L28.32 480.15 L28.88 480.16 L29.41 480.17 L29.92 480.19 L30.40 480.19 L30.83 480.15 L31.13 479.94 L31.43 479.74 L31.74 479.55 L32.05 479.36 L32.37 479.18 L32.69 479.02 L33.02 478.85 L33.35 478.70 L33.59 478.34 L33.83 477.93 L34.07 477.48 L34.33 477.01 L34.60 476.53 L34.88 476.04 L35.20 475.56 L35.53 475.09 L35.90 474.65 L36.28 474.24 L36.69 473.88 L37.13 473.60 L37.60 473.56 L38.06 473.52 L38.53 473.51 L39.00 473.50Z"/><circle cx="39" cy="491.4" r="6.1"/></g>
<g fill="none" stroke="#fff" stroke-width="2.6" stroke-linejoin="round"><path d="M39 564.5 C50 564.5 57.8 572.5 57.8 582 C57.8 592 50 599 40.5 599 C34 599 31 596 28.5 591.5 C27 589 24 590 23 591 C21.5 592.5 20.5 590 20.5 585 C20.5 573 28 564.5 39 564.5Z"/><circle cx="35.7" cy="572.8" r="2.7"/><circle cx="46.1" cy="575" r="2.8"/><circle cx="50.6" cy="582.8" r="2.2"/><circle cx="46.1" cy="591.4" r="3.4"/></g>
<g fill="none" stroke="#979797" stroke-width="2.45" stroke-linecap="round" stroke-linejoin="round"><path d="M22.5 1373 H32 L36 1378 H54 Q56.5 1378 56.5 1380.5 V1400.5 Q56.5 1403 54 1403 H24 Q21.5 1403 21.5 1400.5 V1374 Q21.5 1373 22.5 1373Z"/></g>
<g fill="none" stroke="#979797" stroke-width="2.45" stroke-linecap="round" stroke-linejoin="round"><path d="M23 1474 V1461.5 Q23 1458.5 26 1458.5 H43 L55 1470 V1474 M23 1489 V1493.5 Q23 1496.5 26 1496.5 H52 Q55 1496.5 55 1493.5 V1489"/><rect x="20" y="1473.5" width="38" height="15.5" rx="3"/></g>
<g fill="#8c8c8c"><circle cx="24.2" cy="1566.6" r="3.8"/><circle cx="38.8" cy="1566.6" r="3.8"/><circle cx="53.5" cy="1566.6" r="3.8"/></g>
<g fill="none" stroke="#2a2a2a" stroke-width="2.1" stroke-linecap="round"><circle cx="2303" cy="452" r="12.3"/><path d="M2312 461 L2320.5 469.5"/></g>
<g fill="none" stroke="#2a2a2a" stroke-width="2" stroke-linejoin="round"><path d="M2354 466 H2380.5 Q2376 461 2376 453 V451 Q2376 441 2367.25 441 Q2358.5 441 2358.5 451 V453 Q2358.5 461 2354 466Z"/><path d="M2367.25 438.5 V441" stroke-linecap="round"/><path d="M2364 469 Q2367.25 472 2370.5 469" stroke-linecap="round"/></g>
<defs><radialGradient id="av" cx="0.5" cy="0.4" r="0.6"><stop offset="0" stop-color="#6a6a6a"/><stop offset="0.6" stop-color="#3c3c3c"/><stop offset="1" stop-color="#2a2a2a"/></radialGradient><clipPath id="fr"><rect x="1212" y="416" width="1352" height="1198"/></clipPath></defs>
<defs><clipPath id="avc"><circle cx="2546.6" cy="454.35" r="17.4"/></clipPath></defs><g clip-path="url(#avc)"><rect x="2529" y="436" width="36" height="37" fill="#3a3d40"/><rect x="2529" y="440" width="36" height="8" fill="#4a4d50"/><path d="M2529 465 Q2537 463.5 2545 464.5 Q2555 465 2565 463 V473 H2529Z" fill="#a4a4a4"/><path d="M2549 436 V473" stroke="#1c1c1c" stroke-width="1.3"/><path d="M2529 454.5 H2560" stroke="#1c1c1c" stroke-width="0.9"/><path d="M2555 449 Q2557 455 2555.5 468" stroke="#161616" stroke-width="2"/></g>
<g fill="none" stroke="#6b70f0" stroke-width="1.1"><rect x="1268.6" y="536.9" width="3.6" height="6.5"/><rect x="1276.8" y="530.2" width="3.6" height="13.2"/><rect x="1284.8" y="532.9" width="3.6" height="10.5"/><rect x="1292.6" y="523.6" width="3.6" height="19.8"/><path d="M1267.1 543.6 H1297.8"/></g>
<g fill="none" stroke="#38393d" stroke-width="1.3" stroke-linecap="round" stroke-linejoin="round"><path d="M1272 647.5 H1289 L1294.5 653 V675 Q1294.5 677 1292.5 677 H1272 Q1270 677 1270 675 V649.5 Q1270 647.5 1272 647.5Z"/></g>
<g fill="none" stroke="#38393d" stroke-width="1.3" stroke-linecap="round" stroke-linejoin="round"><path d="M1269.5 776.8 H1277.5 Q1279 776.8 1280 777.8 L1296.7 794.5 Q1297.4 795.3 1296.7 796.1 L1287.2 805.7 Q1286.5 806.4 1285.8 805.7 L1268.7 788.6 Q1267.8 787.7 1267.8 786.4 V778.5 Q1267.8 776.8 1269.5 776.8Z"/><circle cx="1273.8" cy="782.7" r="2.7"/></g>
<g fill="none" stroke="#38393d" stroke-width="1.3" stroke-linecap="round" stroke-linejoin="round"><ellipse cx="1282.5" cy="910" rx="13.9" ry="5.7"/><path d="M1268.6 910 V928.6 A13.9 5.7 0 0 0 1296.4 928.6 V910 M1268.6 915.9 A13.9 5.7 0 0 0 1296.4 915.9 M1268.6 922.1 A13.9 5.7 0 0 0 1296.4 922.1"/></g>
<g fill="none" stroke="#38393d" stroke-width="1.3" stroke-linecap="round" stroke-linejoin="round"><circle cx="1268.6" cy="1015.3" r="2.3"/><circle cx="1268.6" cy="1026.3" r="2.3"/><circle cx="1268.6" cy="1037.3" r="2.3"/><path d="M1278.5 1015.3 H1297.8 M1278.5 1026.3 H1297.8 M1278.5 1037.3 H1297.8"/></g>
<g fill="none" stroke="#38393d" stroke-width="1.3" stroke-linecap="round" stroke-linejoin="round"><path d="M1280.9 1140.5 Q1286 1145 1286 1151 Q1286 1154 1284.5 1156.5 H1277.3 Q1275.8 1154 1275.8 1151 Q1275.8 1145 1280.9 1140.5Z"/><circle cx="1280.9" cy="1148.5" r="1.9"/><path d="M1276.5 1156.5 Q1274 1157 1274 1160 L1274.5 1162.5 Q1277 1160.5 1280.9 1160.5 Q1284.8 1160.5 1287.3 1162.5 L1287.8 1160 Q1287.8 1157 1285.3 1156.5"/><path d="M1277.5 1156.5 V1159.8 M1284.3 1156.5 V1159.8"/><path d="M1280.9 1163.5 Q1283.5 1163.5 1283.5 1166 Q1283.5 1168 1280.9 1170.5 Q1278.3 1168 1278.3 1166 Q1278.3 1163.5 1280.9 1163.5Z"/><path d="M1270.5 1141 Q1267.5 1142.5 1268.5 1144.5 Q1271 1147 1270 1149 Q1269 1150.5 1267 1150"/><path d="M1296 1151.5 Q1292.5 1152.5 1293.5 1154.5 Q1296 1157 1295 1159 Q1294 1160.5 1292.5 1160"/><circle cx="1291.7" cy="1141.7" r="0.5"/><path d="M1274.5 1165 Q1271.5 1165.5 1271.5 1167 Q1269 1167.5 1268 1170 M1287 1165 Q1290 1165.5 1290.5 1167 Q1293 1167.5 1293.5 1170"/></g>
<g fill="none" stroke="#38393d" stroke-width="1.3" stroke-linecap="round" stroke-linejoin="round"><path d="M1268 1252.9 H1296.5 M1268 1261.3 H1296.5 M1268 1269.7 H1296.5" stroke-width="1.6"/></g>
<g fill="none" stroke="#38393d" stroke-width="1.3" stroke-linecap="round" stroke-linejoin="round"><path d="M1268.5 1377.6 H1292.5 M1268.5 1384 H1287.5 M1268.5 1390.3 H1296.5 M1268.5 1396.6 H1291.5 M1268.5 1402.9 H1296.5" stroke-width="1.5"/></g>
<g fill="none" stroke="#38393d" stroke-width="1.3" stroke-linecap="round" stroke-linejoin="round"><rect x="1267.8" y="1509.2" width="29.2" height="20.3" rx="3"/><path d="M1267.8 1514.4 H1297 M1271.1 1519.1 H1281.7 M1289 1519.1 H1293.7 M1271.1 1523.2 H1275.8"/></g>
<g fill="none" stroke="#38393d" stroke-width="1.3" stroke-linecap="round" stroke-linejoin="round"><path d="M1293.5 1614 V1611 H1297.5 V1614"/></g>
<g fill="none" stroke="#4a4a4e" stroke-width="1.3" stroke-linecap="round" stroke-linejoin="round"><path d="M1451.3 661.6 H1465.8 Q1467.7 661.6 1467.7 663.5 V685.3 Q1467.7 687.2 1465.8 687.2 H1448.5 Q1446.6 687.2 1446.6 685.3 V666.3 Z"/></g>
<g fill="none" stroke="#4a4a4e" stroke-width="1.3" stroke-linecap="round" stroke-linejoin="round"><path d="M1752.2 661 H1745 Q1743.8 661 1742.9 661.9 L1726.9 677.9 Q1726.2 678.6 1726.9 679.3 L1735.3 687.6 Q1736 688.3 1736.7 687.6 L1752.7 671.6 Q1753.6 670.7 1753.6 669.5 V662.4 Q1753.6 661 1752.2 661Z"/><circle cx="1748.2" cy="666.2" r="2"/></g>
<g fill="none" stroke="#4a4a4e" stroke-width="1.3" stroke-linecap="round" stroke-linejoin="round"><circle cx="2017.3" cy="666.1" r="4.9"/><path d="M2021.1 673.5 Q2018 672 2015.5 672.3 Q2009.8 673.2 2009.3 680.4 H2018.2"/><circle cx="2028.4" cy="680.4" r="6.8"/><path d="M2028.4 677 V683.8 M2025 680.4 H2031.8"/></g>
<g fill="none" stroke="#4a4a4e" stroke-width="1.1"><rect x="2293.3" y="677.2" width="3" height="5.5"/><rect x="2300.2" y="671.5" width="3" height="11.2"/><rect x="2307" y="673.8" width="3" height="8.9"/><rect x="2313.6" y="666" width="3" height="16.7"/><path d="M2292 683 H2318"/></g>
<g fill="none" stroke="#2e2e2e" stroke-width="1.5" stroke-linejoin="round"><path d="M2410.5 1122.8 L2412.0 1117.2 L2422.5 1106.8 L2426.5 1110.8 L2416.0 1121.2 Z M2412.0 1117.2 L2416.0 1121.2"/></g>
<g fill="none" stroke="#2e2e2e" stroke-width="1.5" stroke-linejoin="round"><path d="M2449.5 1109.2 H2469 M2455.5 1109.2 V1106.8 H2463 V1109.2 M2451.5 1109.2 L2453 1123.8 H2465.5 L2467 1109.2 M2456 1111.8 V1121.2 M2459.25 1111.8 V1121.2 M2462.5 1111.8 V1121.2"/></g>
<g fill="none" stroke="#2e2e2e" stroke-width="1.5" stroke-linejoin="round"><path d="M2410.5 1213.8 L2412.0 1208.2 L2422.5 1197.8 L2426.5 1201.8 L2416.0 1212.2 Z M2412.0 1208.2 L2416.0 1212.2"/></g>
<g fill="none" stroke="#2e2e2e" stroke-width="1.5" stroke-linejoin="round"><path d="M2449.5 1200.2 H2469 M2455.5 1200.2 V1197.8 H2463 V1200.2 M2451.5 1200.2 L2453 1214.8 H2465.5 L2467 1200.2 M2456 1202.8 V1212.2 M2459.25 1202.8 V1212.2 M2462.5 1202.8 V1212.2"/></g>
<g fill="none" stroke="#2e2e2e" stroke-width="1.5" stroke-linejoin="round"><path d="M2410.5 1304.8 L2412.0 1299.2 L2422.5 1288.8 L2426.5 1292.8 L2416.0 1303.2 Z M2412.0 1299.2 L2416.0 1303.2"/></g>
<g fill="none" stroke="#2e2e2e" stroke-width="1.5" stroke-linejoin="round"><path d="M2449.5 1291.2 H2469 M2455.5 1291.2 V1288.8 H2463 V1291.2 M2451.5 1291.2 L2453 1305.8 H2465.5 L2467 1291.2 M2456 1293.8 V1303.2 M2459.25 1293.8 V1303.2 M2462.5 1293.8 V1303.2"/></g>
<g fill="none" stroke="#2e2e2e" stroke-width="1.5" stroke-linejoin="round"><path d="M2410.5 1395.8 L2412.0 1390.2 L2422.5 1379.8 L2426.5 1383.8 L2416.0 1394.2 Z M2412.0 1390.2 L2416.0 1394.2"/></g>
<g fill="none" stroke="#2e2e2e" stroke-width="1.5" stroke-linejoin="round"><path d="M2449.5 1382.2 H2469 M2455.5 1382.2 V1379.8 H2463 V1382.2 M2451.5 1382.2 L2453 1396.8 H2465.5 L2467 1382.2 M2456 1384.8 V1394.2 M2459.25 1384.8 V1394.2 M2462.5 1384.8 V1394.2"/></g>
<g fill="none" stroke="#2e2e2e" stroke-width="1.5" stroke-linejoin="round"><path d="M2410.5 1486.8 L2412.0 1481.2 L2422.5 1470.8 L2426.5 1474.8 L2416.0 1485.2 Z M2412.0 1481.2 L2416.0 1485.2"/></g>
<g fill="none" stroke="#2e2e2e" stroke-width="1.5" stroke-linejoin="round"><path d="M2449.5 1473.2 H2469 M2455.5 1473.2 V1470.8 H2463 V1473.2 M2451.5 1473.2 L2453 1487.8 H2465.5 L2467 1473.2 M2456 1475.8 V1485.2 M2459.25 1475.8 V1485.2 M2462.5 1475.8 V1485.2"/></g>
<g fill="none" stroke="#2e2e2e" stroke-width="1.5" stroke-linejoin="round"><path d="M2410.5 1577.8 L2412.0 1572.2 L2422.5 1561.8 L2426.5 1565.8 L2416.0 1576.2 Z M2412.0 1572.2 L2416.0 1576.2"/></g>
<g fill="none" stroke="#2e2e2e" stroke-width="1.5" stroke-linejoin="round"><path d="M2449.5 1564.2 H2469 M2455.5 1564.2 V1561.8 H2463 V1564.2 M2451.5 1564.2 L2453 1578.8 H2465.5 L2467 1564.2 M2456 1566.8 V1576.2 M2459.25 1566.8 V1576.2 M2462.5 1566.8 V1576.2"/></g>
<path d="M352,491 C333,540 292,595 252.6,619.4 C232,631 215,633 202.5,632.3 C185,631.5 170,629 140,620" fill="none" stroke="#ef9a39" stroke-width="17"/>
<path d="M80,587.5 L171,587 L135.5,660.5 Z" fill="#ef9a39"/>
</svg>
<div id="t3" class="t" style="top:30.85px;font-size:26.16px;color:#fff;left:2823.00px;transform-origin:left center;transform:translateX(-50%) scaleX(1.0000);">SK</div>
</body></html>
